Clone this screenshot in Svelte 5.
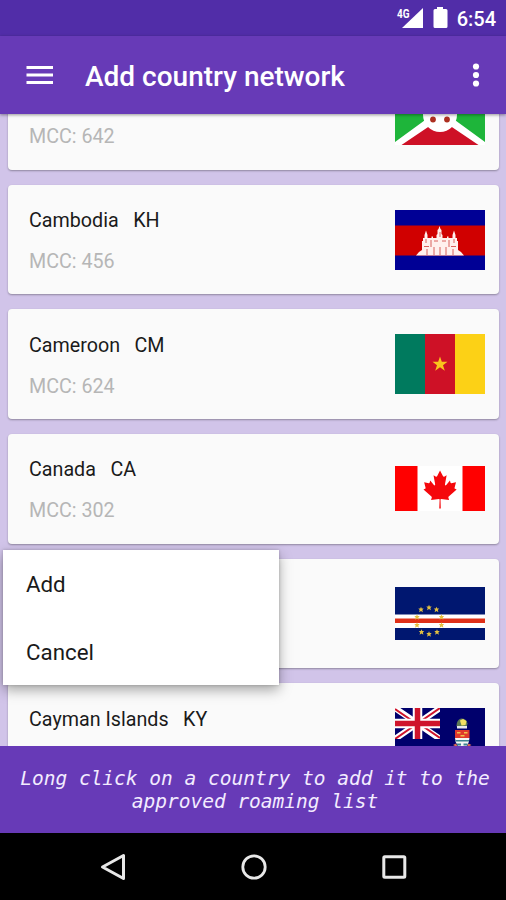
<script lang="ts">
  interface Country { name: string; code: string; mcc: string; height: number; }

  const countries: Country[] = [
    { name: 'Burundi', code: 'BI', mcc: '642', height: 60 },
    { name: 'Cambodia', code: 'KH', mcc: '456', height: 60 },
    { name: 'Cameroon', code: 'CM', mcc: '624', height: 60 },
    { name: 'Canada', code: 'CA', mcc: '302', height: 45 },
    { name: 'Cape Verde', code: 'CV', mcc: '625', height: 53 },
    { name: 'Cayman Islands', code: 'KY', mcc: '346', height: 60 },
  ];

  const cvStars = [[34, 20.5], [41.5, 22.5], [46.5, 30], [46.5, 38], [42, 45], [34, 47], [26.5, 45], [22, 38], [22, 30], [26, 22.5]];

  let menuOpen = $state(true);
</script>

{#snippet flag(code: string, height: number)}
  <svg class="flag" width="90" {height} viewBox="0 0 90 {height}">
    {#if code === 'BI'}
      <path fill="#fff" d="M0 0h90v60H0z"/>
      <path fill="#1eb53a" d="M0 4l37 26L0 57zM90 4L53 30l37 27z"/>
      <path fill="#ce1126" d="M6 0h78L45 27zM6.500 60L45 34l38.500 26z"/>
      <circle cx="45" cy="30" r="17" fill="#fff"/>
      <circle cx="45" cy="24" r="3" fill="#ad1f23"/>
      <circle cx="38" cy="34.500" r="2.900" fill="#ad2f20"/>
      <circle cx="52" cy="34.500" r="2.900" fill="#ad2f20"/>
    {:else if code === 'KH'}
      <path fill="#000095" d="M0 0h90v60H0z"/>
      <path fill="#d00000" d="M0 15.500h90v30H0z"/>
      <path fill="#fff0ee" d="M21 45.500l3-3.500 3-2V31h1v-3h1.500v-3L31 20.500l1.500 4.500v3h4v-1.500h1.500V28h3.500v-3l1-1v-4l1-1 1-3 1 3 1 1v4l1 1v3H52v-1.500h1.500V28h4v-3l1.500-4.500 1.500 4.500v3H62v3h1v9l3 2 3 3.500z"/>
      <path fill="none" stroke="#d4504c" stroke-width=".9" d="M31 29v4M29 36.500h5M36 30v7M39 31h4M47 31h4M45 22v5M54 30v7M59 29v4M56 36.500h5M32 45v-6M39 45v-8M45 45v-8M51 45v-8M58 45v-6"/>
    {:else if code === 'CM'}
      <path fill="#007a5e" d="M0 0h30v60H0z"/>
      <path fill="#ce1126" d="M30 0h30v60H30z"/>
      <path fill="#fcd116" d="M60 0h30v60H60z"/>
      <path fill="#f9c41c" d="M45 22.500l1.800 5.300h5.700l-4.500 3.400 1.800 5.500-4.800-3.400-4.800 3.400 1.800-5.500-4.500-3.400h5.700z"/>
    {:else if code === 'CA'}
      <path fill="#fff" d="M0 0h90v45H0z"/>
      <path fill="#f00" d="M0 0h22.500v45H0zM67.500 0H90v45H67.500z"/>
      <path fill="#f5080c" transform="translate(2.500 0) scale(.945 1)" d="M45 4.500l-3.100 5.700c-.4.600-1 .6-1.600.2L38.100 9.300l1.700 8.800c.3 1.600-.8 1.600-1.300.9l-3.900-4.400-.6 2.200c-.1.300-.4.600-.9.500l-4.900-1 1.300 4.700c.3 1 .5 1.500-.3 1.700l-1.700.8 8.400 6.900c.3.300.5.700.4 1.200l-.8 2.400c2.900-.3 5.500-.8 8.400-1.100.3 0 .7.400.7.700l-.4 8.900h1.600l-.3-8.900c0-.3.400-.7.700-.7 2.900.3 5.500.8 8.400 1.100l-.8-2.400c-.1-.5.100-.9.400-1.200l8.400-6.900-1.700-.8c-.8-.2-.6-.7-.3-1.700l1.300-4.700-4.900 1c-.5.100-.8-.2-.9-.5l-.6-2.200-3.900 4.400c-.5.700-1.600.7-1.300-.9l1.700-8.800-2.200 1.100c-.6.400-1.200.4-1.600-.2z"/>
    {:else if code === 'CV'}
      <path fill="#001770" d="M0 0h90v53H0z"/>
      <path fill="#fff" d="M0 27.500h90v13.500H0z"/>
      <path fill="#df3018" d="M0 31.500h90v4.500H0z"/>
      {#each cvStars as [x, y]}
        <path fill="#e3c040" transform="translate({x} {y}) scale(.95)" d="M0-2.800L.8-1h2L1.400.6l.6 2.200L0 1.700l-2 1.100.6-2.200L-2.800-1h2z"/>
      {/each}
    {:else if code === 'KY'}
      <path fill="#00006c" d="M0 0h90v60H0z"/>
      <svg width="45" height="31" viewBox="0 0 45 31">
        <path stroke="#fff" stroke-width="6" d="M0 0l45 31M45 0L0 31"/>
        <path stroke="#cf142b" stroke-width="2" d="M0 1l22 15M45 30L23 15M45 0L24 14.500M0 31l21-14.500"/>
        <path stroke="#fff" stroke-width="9.500" d="M22.500 0v31M0 15.500h45"/>
        <path stroke="#cf142b" stroke-width="5.500" d="M22.500 0v31M0 15.500h45"/>
      </svg>
      <!-- coat of arms: turtle and pineapple over the shield -->
      <path fill="#5f7b56" d="M61.500 18q0-6 4.500-7.500 5.500 0 6.500 5l-1 4h-9z"/>
      <path fill="#f2df63" d="M65 12.500l3-1.500 3.500 2-1 4-4 .5z"/>
      <path fill="#e8e8ef" d="M62 18h10v2.500H62z"/>
      <path fill="#e0382c" d="M60 22h14.500v8H60z"/>
      <path fill="#f0c04a" d="M62 24h3.500v1.500H62zM69 24h3.500v1.500H69zM65.500 27h4v1.500h-4z"/>
      <path fill="#f4f6f4" d="M60 30h14.500q0 7-7 12-7.500-5-7.500-12z"/>
      <path fill="#3a8290" d="M60.500 32h13.500v1.500H60.500zM62 35.500h4v2h-4zM68.500 35.500h4v2h-4z"/>
      <path fill="#e06c54" d="M58 37l3-1.500 2 4zM76.500 37l-3-1.500-2 4z"/>
    {/if}
  </svg>
{/snippet}

<div class="screen">
  <div class="status-bar">
    <svg width="29" height="24" viewBox="0 0 29 24">
      <text class="net" x="1" y="12" textLength="12.500" lengthAdjust="spacingAndGlyphs">4G</text>
      <path fill="#fff" d="M27 2v20H6z"/>
    </svg>
    <svg class="battery" width="15" height="22" viewBox="0 0 15 22">
      <path fill="#fff" d="M4 0h6v2h3q1.500 0 1.500 1.500v16q0 1.500-1.500 1.500H2q-1.500 0-1.500-1.500v-16Q.5 2 2 2h2z"/>
    </svg>
    <span class="clock">6:54</span>
  </div>

  <header class="app-bar">
    <svg class="burger" width="28" height="20" viewBox="0 0 28 20">
      <path stroke="#fff" stroke-width="3" d="M.500 2.500h26.500M.500 10h26.500M.500 17.500h26.500"/>
    </svg>
    <h1>Add country network</h1>
    <svg width="8" height="24" viewBox="0 0 8 24">
      <g fill="#fff"><circle cx="4" cy="3.500" r="3.100"/><circle cx="4" cy="12" r="3.100"/><circle cx="4" cy="20.500" r="3.100"/></g>
    </svg>
  </header>

  <main class="list">
    {#each countries as c}
      <div class="card">
        <div class="info">
          <div class="name"><span>{c.name}</span><span>{c.code}</span></div>
          <div class="mcc">MCC: {c.mcc}</div>
        </div>
        {@render flag(c.code, c.height)}
      </div>
    {/each}
  </main>

  <div class="hint">Long click on a country to add it to the approved roaming list</div>

  <nav class="nav-bar">
    <svg width="28" height="30" viewBox="0 0 28 30">
      <path fill="none" stroke="#e8e8e8" stroke-width="3" stroke-linejoin="round" d="M23.500 3.500v23L2.500 15z"/>
    </svg>
    <svg width="28" height="30" viewBox="0 0 28 30">
      <circle cx="14" cy="15" r="11.200" fill="none" stroke="#e8e8e8" stroke-width="2.800"/>
    </svg>
    <svg width="28" height="30" viewBox="0 0 28 30">
      <rect x="3.800" y="4.800" width="21" height="20.500" rx="1" fill="none" stroke="#e8e8e8" stroke-width="3"/>
    </svg>
  </nav>

  {#if menuOpen}
    <div class="menu">
      <button onclick={() => (menuOpen = false)}>Add</button>
      <button onclick={() => (menuOpen = false)}>Cancel</button>
    </div>
  {/if}
</div>

<style>
  :global(body) { margin: 0; }

  .screen {
    position: relative;
    width: 506px;
    height: 900px;
    display: flex;
    flex-direction: column;
    overflow: hidden;
    font-family: Roboto, 'Liberation Sans', sans-serif;
    background: #d1c4e9;
  }

  .status-bar {
    height: 36px;
    flex-shrink: 0;
    box-sizing: border-box;
    padding-right: 10px;
    display: flex;
    align-items: center;
    justify-content: flex-end;
    background: #512da8;
    color: #fff;
  }
  .net { font-size: 12px; font-weight: 700; fill: #fff; }
  .battery { margin-left: 8px; }
  .clock { margin-left: 9px; font-size: 20px; font-weight: 500; line-height: 36px; padding-top: 2px; }

  .app-bar {
    position: relative;
    z-index: 1;
    height: 78px;
    flex-shrink: 0;
    box-sizing: border-box;
    padding: 0 26px;
    display: flex;
    align-items: center;
    background: #673ab7;
    color: #fff;
    box-shadow: 0 1px 3px rgba(0, 0, 0, 0.4);
  }
  h1 { flex: 1; margin: 0 0 0 31px; font-size: 28px; font-weight: 500; line-height: 40px; padding-top: 3px; }

  /* scrolled so that the first card is half under the app bar */
  .list {
    flex: 1;
    min-height: 0;
    overflow: hidden;
    padding: 0 7px 0 8px;
  }
  .card {
    height: 109.700px;
    margin-bottom: 15px;
    box-sizing: border-box;
    padding: 0 14px 0 21px;
    display: flex;
    align-items: center;
    justify-content: space-between;
    background: #fafafa;
    border-radius: 4px;
    box-shadow: 0 1px 2px rgba(0, 0, 0, 0.32);
  }
  .card:first-child { margin-top: -54px; }
  .info { padding-top: 4px; }
  .name { display: flex; gap: 14.500px; font-size: 19.700px; line-height: 24px; color: #1a1a1a; }
  .mcc { margin-top: 17px; font-size: 19.700px; line-height: 24px; color: #b6b6b6; }
  .flag { display: block; flex-shrink: 0; }

  .hint {
    height: 87px;
    flex-shrink: 0;
    box-sizing: border-box;
    padding: 21px 10px 0 14px;
    background: #673ab7;
    color: #f3ecff;
    font-family: 'DejaVu Sans Mono', monospace;
    font-size: 19.500px;
    font-style: italic;
    line-height: 23px;
    text-align: center;
  }

  .nav-bar {
    height: 67px;
    flex-shrink: 0;
    box-sizing: border-box;
    padding-left: 2px;
    display: flex;
    align-items: center;
    justify-content: center;
    gap: 112px;
    background: #000;
  }

  .menu {
    position: absolute;
    left: 3px;
    top: 550px;
    width: 276px;
    height: 135px;
    display: flex;
    flex-direction: column;
    background: #fff;
    box-shadow: 0 5px 12px rgba(0, 0, 0, 0.34), 0 0 3px rgba(0, 0, 0, 0.2);
  }
  button {
    flex: 1;
    padding: 1px 23px 0;
    border: 0;
    background: none;
    font: 22.300px Roboto, sans-serif;
    color: #1a1a1a;
    text-align: left;
  }
</style>
